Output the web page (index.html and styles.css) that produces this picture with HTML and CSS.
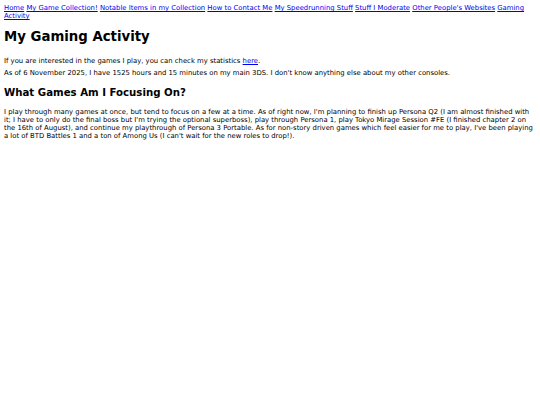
FILE: index.html
```html
<!DOCTYPE html>
<html>
<head>
<meta charset="utf-8">
<title>My Gaming Activity</title>
<link rel="stylesheet" href="styles.css">
</head>
<body>
<nav class="nav">
<a href="#">Home</a> <a href="#">My Game Collection!</a> <a href="#">Notable Items in my Collection</a> <a href="#">How to Contact Me</a> <a href="#">My Speedrunning Stuff</a> <a href="#">Stuff I Moderate</a> <a href="#">Other People's Websites</a> <a href="#">Gaming Activity</a>
</nav>
<h1 class="title">My Gaming Activity</h1>
<p class="text">If you are interested in the games I play, you can check my statistics <a href="#">here</a>.</p>
<p class="text">As of 6 November 2025, I have 1525 hours and 15 minutes on my main 3DS. I don't know anything else about my other consoles.</p>
<h2 class="subtitle">What Games Am I Focusing On?</h2>
<p class="text">I play through many games at once, but tend to focus on a few at a time. As of right now, I'm planning to finish up Persona Q2 (I am almost finished with it; I have to only do the final boss but I'm trying the optional superboss), play through Persona 1, play Tokyo Mirage Session #FE (I finished chapter 2 on the 16th of August), and continue my playthrough of Persona 3 Portable. As for non-story driven games which feel easier for me to play, I've been playing a lot of BTD Battles 1 and a ton of Among Us (I can't wait for the new roles to drop!).</p>
</body>
</html>
```
FILE: styles.css
```css
html { background: #fff; }
body {
  margin: 4px;
  font-family: "DejaVu Sans", Verdana, sans-serif;
  font-size: 6.85px;
  line-height: 8px;
  color: #000;
}
a { color: #0000ee; }
.nav { display: block; }
.title {
  font-size: 13.3px;
  line-height: 16px;
  margin: 9px 0 11.8px;
  font-weight: bold;
}
.subtitle {
  font-size: 10.2px;
  line-height: 12px;
  margin: 9.8px 0 9.5px;
  font-weight: bold;
}
.text { margin: 4.4px 0; }
```
